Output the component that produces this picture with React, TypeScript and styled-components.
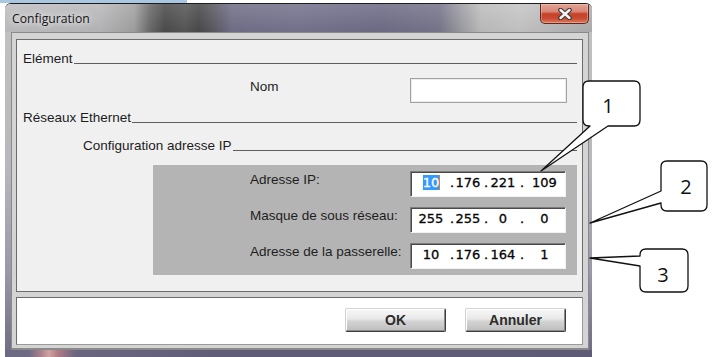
import React from "react";
import styled, { createGlobalStyle } from "styled-components";

const Global = createGlobalStyle`
  html, body { margin: 0; padding: 0; background: #ffffff; }
  body { width: 721px; height: 357px; overflow: hidden; }
`;

const Page = styled.div`
  position: relative;
  width: 721px;
  height: 357px;
  overflow: hidden;
  background: #ffffff;
  font-family: "Liberation Sans", Arial, sans-serif;
`;

const DocStrip = styled.div`
  display: flex;
  height: 3px;
`;

const Selection = styled.div`
  width: 187px;
  height: 3px;
  background: #a9c7e0;
`;

const Window = styled.div`
  margin-left: 5px;
  width: 587px;
  height: 360px;
  border-top: 1px solid #1c1c1c;
  border-radius: 6px 6px 0 0;
  overflow: hidden;
  display: flex;
  flex-direction: column;
  background: linear-gradient(
    to bottom,
    #c2c2c4 0%,
    #b8b8bc 45%,
    #9896a8 75%,
    #6a677f 100%
  );
`;

const TitleBar = styled.div`
  flex: none;
  height: 28px;
  display: flex;
  justify-content: space-between;
  align-items: flex-start;
  background:
    linear-gradient(to bottom, rgba(255, 255, 255, 0.12), rgba(0, 0, 0, 0.04)),
    linear-gradient(
      to right,
      #bfbfc1 0%,
      #b9b9bb 16%,
      #a2a2a2 22%,
      #6a6a6a 24.7%,
      #4c4c4c 27.3%,
      #575757 30.7%,
      #4a4a4a 33%,
      #5d5c66 35.8%,
      #717089 38.7%,
      #76748e 50%,
      #6f6d87 64%,
      #78768c 74%,
      #9b9ba2 77.5%,
      #bdbdbd 81%,
      #c6c6c6 87.7%,
      #b9b9b9 94.5%,
      #b0b0b0 100%
    );
`;

const Title = styled.div`
  margin: 6px 0 0 7px;
  font-family: "Open Sans", "Noto Sans", sans-serif;
  font-size: 12.2px;
  line-height: 18px;
  color: #141414;
  text-shadow: 0 0 6px rgba(255, 255, 255, 0.9), 0 0 10px rgba(255, 255, 255, 0.6);
`;

const CloseButton = styled.div`
  width: 49px;
  height: 20px;
  margin-right: 3px;
  box-sizing: border-box;
  border: 1px solid #5c2a22;
  border-top: none;
  border-radius: 0 0 5px 5px;
  display: flex;
  align-items: center;
  justify-content: center;
  box-shadow: inset 0 0 0 1px rgba(255, 220, 210, 0.35);
  background: linear-gradient(
    to bottom,
    #e3a596 0%,
    #d88676 40%,
    #c6412a 52%,
    #c84a30 75%,
    #df7a5c 100%
  );
`;

const ClientFrame = styled.div`
  flex: none;
  margin: 0 3px 0 6px;
  border: 1px solid #8a8a8a;
  border-bottom-width: 2px;
  background: #d4d4d4;
  padding: 6px 5px 3px 4px;
  display: flex;
  flex-direction: column;
  gap: 5px;
`;

const ContentPanel = styled.div`
  box-sizing: border-box;
  height: 253px;
  border: 1px solid #6c6c6c;
  background: #f0f0f0;
  padding: 11px 5px 0 6px;
  display: flex;
  flex-direction: column;
`;

const SectionHeader = styled.div<{ $indent: number; $gap: number }>`
  display: flex;
  align-items: flex-end;
  height: 16px;
  margin-left: ${(p) => p.$indent}px;
  margin-top: ${(p) => p.$gap}px;
`;

const SectionText = styled.span`
  font-size: 13.5px;
  line-height: 16px;
  color: #1c1c1c;
  white-space: nowrap;
`;

const Rule = styled.div`
  flex: 1;
  margin: 0 0 3px 1px;
  border-bottom: 1px solid #5e5e5e;
`;

const FormRow = styled.div<{ $indent: number; $gap: number }>`
  display: flex;
  align-items: flex-start;
  margin-top: ${(p) => p.$gap}px;
  padding-left: ${(p) => p.$indent}px;
`;

const Label = styled.div`
  width: 160px;
  margin-top: 1px;
  font-size: 13.5px;
  line-height: 16px;
  color: #1e1e1e;
  white-space: nowrap;
`;

const TextInput = styled.div`
  box-sizing: border-box;
  width: 157px;
  height: 25px;
  background: #ffffff;
  border: 1px solid #a2a2a2;
  box-shadow: inset 0 0 0 1px #ececec;
`;

const GrayPanel = styled.div`
  margin: 11px 0 0 130px;
  background: #b4b4b4;
  padding: 6px 11px 6px 97px;
  display: flex;
  flex-direction: column;
  gap: 10px;
`;

const IpRow = styled.div`
  display: flex;
  align-items: flex-start;
`;

const IpBox = styled.div`
  box-sizing: border-box;
  width: 156px;
  height: 26px;
  background: #ffffff;
  border: 1px solid;
  border-color: #7c7c7c #f2f2f2 #f2f2f2 #7c7c7c;
  box-shadow: inset 1px 1px 0 #4a4a4a;
  padding-left: 1px;
  display: flex;
  font-family: "DejaVu Sans", sans-serif;
  font-size: 13px;
  line-height: 22px;
  color: #050505;
  -webkit-text-stroke: 0.3px #050505;
`;

const Octet = styled.span<{ $w: number }>`
  width: ${(p) => p.$w}px;
  text-align: center;
  white-space: nowrap;
`;

const Dot = styled.span<{ $w: number }>`
  width: ${(p) => p.$w}px;
  text-align: center;
`;

const Selected = styled.span`
  background: #3399ff;
  color: #ffffff;
  -webkit-text-stroke: 0.3px #ffffff;
  box-shadow: 1px 0 0 #e47a2c;
`;

const ButtonArea = styled.div`
  box-sizing: border-box;
  height: 48px;
  background: #ffffff;
  border: 1px solid;
  border-color: #6c6c6c #9a9a9a #9a9a9a #6c6c6c;
  display: flex;
  justify-content: flex-end;
  align-items: flex-start;
  padding: 10px 16px 0 0;
  gap: 19px;
`;

const Button = styled.div`
  box-sizing: border-box;
  width: 101px;
  height: 24px;
  border: 1px solid;
  border-color: #d4d4d4 #3c3c3c #3c3c3c #cfcfcf;
  border-radius: 2px;
  box-shadow: inset -1px -1px 0 #8c8c8c, inset 1px 1px 0 #ffffff;
  background: linear-gradient(
    to bottom,
    #f7f7f7 0%,
    #e9e9e9 45%,
    #d4d4d4 55%,
    #bdbdbd 100%
  );
  display: flex;
  align-items: center;
  justify-content: center;
  font-size: 14px;
  font-weight: bold;
  color: #2c2c2c;
`;

const BottomGlass = styled.div`
  flex: 1;
  background: linear-gradient(
    to right,
    #6c6982 0%,
    #6e6a84 4%,
    #a8808a 6%,
    #cfa3a3 7.5%,
    #b07a84 9%,
    #6a6680 12%,
    #5f5c78 40%,
    #5e5b77 100%
  );
`;

const Overlay = styled.svg`
  position: absolute;
  left: 0;
  top: 0;
  pointer-events: none;
`;

type IpProps = { octets: string[]; selectFirst?: boolean };

const octetWidths = [38, 28, 26, 33];
const dotWidths = [4, 8, 12];

function IpField({ octets, selectFirst }: IpProps) {
  const parts: React.ReactNode[] = [];
  octets.forEach((o, i) => {
    parts.push(
      <Octet key={`o${i}`} $w={octetWidths[i]}>
        {i === 0 && selectFirst ? <Selected>{o}</Selected> : o}
      </Octet>
    );
    if (i < 3) {
      parts.push(
        <Dot key={`d${i}`} $w={dotWidths[i]}>
          .
        </Dot>
      );
    }
  });
  return <IpBox>{parts}</IpBox>;
}

const callouts = [
  {
    d: "M589 81 H634 Q640 81 640 87 V120 Q640 126 634 126 H608 L541 171 L590 126 H589 Q583 126 583 120 V87 Q583 81 589 81 Z",
    n: "1",
    x: 608,
    y: 113,
  },
  {
    d: "M667 161 H701 Q707 161 707 167 V205 Q707 211 701 211 H667 Q661 211 661 205 V203 L590 223 L661 191 V167 Q661 161 667 161 Z",
    n: "2",
    x: 686,
    y: 194,
  },
  {
    d: "M646 249 H682 Q688 249 688 255 V286 Q688 292 682 292 H646 Q640 292 640 286 V266 L590 258 L640 256 V255 Q640 249 646 249 Z",
    n: "3",
    x: 663,
    y: 282,
  },
];

export default function App() {
  return (
    <Page>
      <Global />
      <DocStrip>
        <Selection />
      </DocStrip>
      <Window>
        <TitleBar>
          <Title>Configuration</Title>
          <CloseButton>
            <svg width="14" height="12" viewBox="0 0 14 12">
              <path d="M2.5 2 L11.5 10 M11.5 2 L2.5 10" stroke="#3a3a3a" strokeWidth="4.6" strokeLinecap="round" />
              <path d="M2.5 2 L11.5 10 M11.5 2 L2.5 10" stroke="#f4f4f4" strokeWidth="2.4" strokeLinecap="round" />
            </svg>
          </CloseButton>
        </TitleBar>
        <ClientFrame>
          <ContentPanel>
            <SectionHeader $indent={0} $gap={0}>
              <SectionText>Elément</SectionText>
              <Rule />
            </SectionHeader>
            <FormRow $indent={227} $gap={11}>
              <Label>Nom</Label>
              <TextInput />
            </FormRow>
            <SectionHeader $indent={0} $gap={7}>
              <SectionText>Réseaux Ethernet</SectionText>
              <Rule />
            </SectionHeader>
            <SectionHeader $indent={60} $gap={12}>
              <SectionText>Configuration adresse IP</SectionText>
              <Rule />
            </SectionHeader>
            <GrayPanel>
              <IpRow>
                <Label>Adresse IP:</Label>
                <IpField octets={["10", "176", "221", "109"]} selectFirst />
              </IpRow>
              <IpRow>
                <Label>Masque de sous réseau:</Label>
                <IpField octets={["255", "255", "0", "0"]} />
              </IpRow>
              <IpRow>
                <Label>Adresse de la passerelle:</Label>
                <IpField octets={["10", "176", "164", "1"]} />
              </IpRow>
            </GrayPanel>
          </ContentPanel>
          <ButtonArea>
            <Button>OK</Button>
            <Button>Annuler</Button>
          </ButtonArea>
        </ClientFrame>
        <BottomGlass />
      </Window>
      <Overlay width="721" height="357" viewBox="0 0 721 357">
        {callouts.map((c) => (
          <g key={c.n}>
            <path d={c.d} fill="#ffffff" stroke="#111111" strokeWidth="1.3" strokeLinejoin="round" />
            <text
              x={c.x}
              y={c.y}
              textAnchor="middle"
              fontFamily="'Open Sans', 'Noto Sans', sans-serif"
              fontSize="20"
              fill="#111111"
            >
              {c.n}
            </text>
          </g>
        ))}
      </Overlay>
    </Page>
  );
}
